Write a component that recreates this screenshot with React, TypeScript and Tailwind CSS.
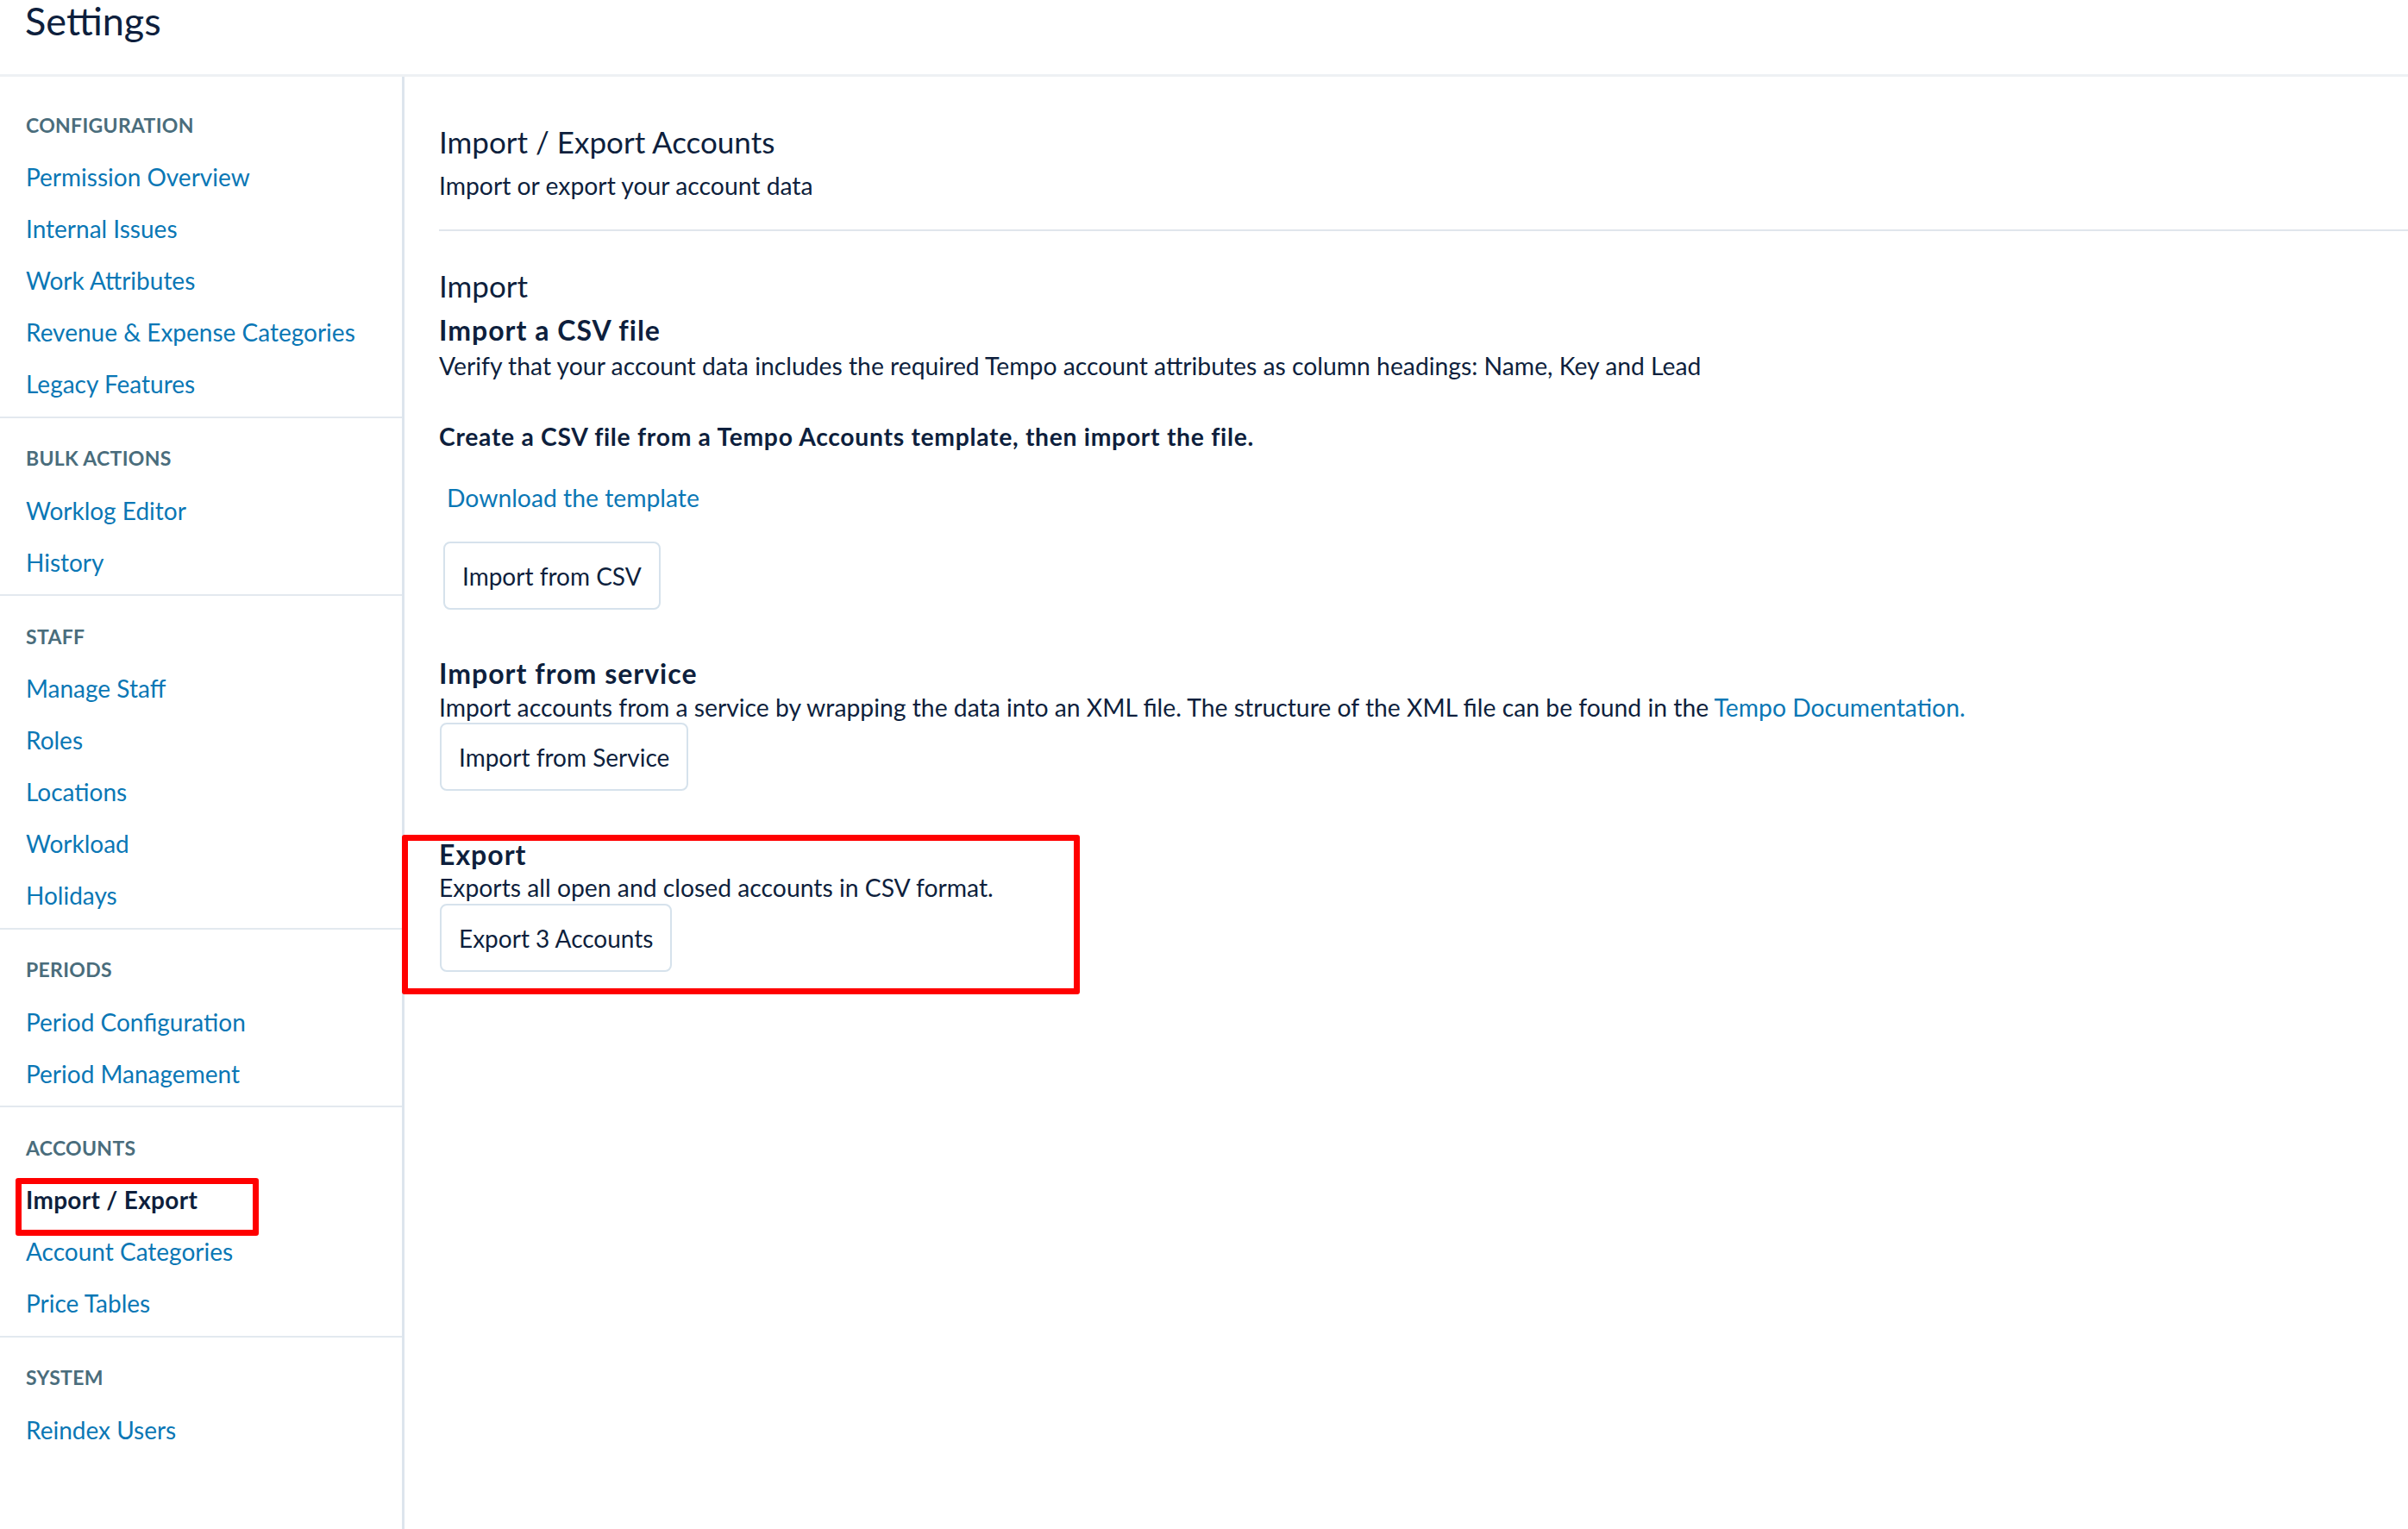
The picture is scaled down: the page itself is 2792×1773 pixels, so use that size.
import React from "react";

type NavGroup = {
    title: string;
    items: string[];
};

const groups: NavGroup[] = [
    { title: "CONFIGURATION", items: ["Permission Overview", "Internal Issues", "Work Attributes", "Revenue & Expense Categories", "Legacy Features"] },
    { title: "BULK ACTIONS", items: ["Worklog Editor", "History"] },
    { title: "STAFF", items: ["Manage Staff", "Roles", "Locations", "Workload", "Holidays"] },
    { title: "PERIODS", items: ["Period Configuration", "Period Management"] },
    { title: "ACCOUNTS", items: ["Import / Export", "Account Categories", "Price Tables"] },
    { title: "SYSTEM", items: ["Reindex Users"] },
];

const ACTIVE = "Import / Export";

function Sidebar() {
    return (
        <aside className="w-[469px] shrink-0 border-r-[3px] border-[#dde5ed] pt-[9px]">
            {groups.map((group, gi) => (
                <div
                    key={group.title}
                    className={`pt-[17px] pb-[7.5px] ${gi < groups.length - 1 ? "border-b-2 border-[#e3e9ef]" : ""}`}
                >
                    <div className="h-[60px] flex items-center px-[30px] text-[23px] font-bold text-[#4a6d7c] tracking-[0.3px]">
                        {group.title}
                    </div>
                    {group.items.map((item) =>
                        item === ACTIVE ? (
                            <div key={item} className="relative h-[60px] flex items-center px-[30px]">
                                <span className="text-[28px] font-bold text-[#0e1f3d] tracking-[0.3px]">{item}</span>
                                {/* highlight box */}
                                <div className="absolute left-[18px] top-[5px] w-[282px] h-[67px] border-[7px] border-[#ff0000] rounded-[3px]" />
                            </div>
                        ) : (
                            <a key={item} href="#" className="h-[60px] flex items-center px-[30px] text-[28px] text-[#0a77b5]">
                                {item}
                            </a>
                        )
                    )}
                </div>
            ))}
        </aside>
    );
}

function OutlineButton({ label }: { label: string }) {
    return (
        <button className="h-[79px] px-[20px] border-2 border-[#d6e2ec] rounded-[8px] bg-white text-[28px] text-[#0e1f3d]">
            {label}
        </button>
    );
}

function App() {
    return (
        <div className="w-[2792px] min-h-[1773px] bg-white text-[#0e1f3d] font-['Lato',sans-serif] flex flex-col">
            {/* header */}
            <header className="h-[89px] shrink-0 border-b-[3px] border-[#eef1f4] px-[29px]">
                <h1 className="text-[45px] leading-none pt-[2px] font-normal">Settings</h1>
            </header>

            <div className="flex flex-1">
                <Sidebar />

                <main className="flex-1 pl-[40px] pt-[53px] text-[28.3px]">
                    <h2 className="text-[35px] leading-[44px]">Import / Export Accounts</h2>
                    <p className="mt-[11px] leading-[36px]">Import or export your account data</p>

                    <div className="mt-[33px] border-t-2 border-[#e0e6ec]" />

                    <h2 className="mt-[41px] text-[35px] leading-[44px]">Import</h2>
                    <h3 className="mt-[10px] text-[32px] leading-[40px] font-bold tracking-[1px]">Import a CSV file</h3>
                    <p className="mt-[3px] leading-[36px]">
                        Verify that your account data includes the required Tempo account attributes as column headings: Name, Key and Lead
                    </p>
                    <p className="mt-[46px] leading-[36px] font-bold tracking-[0.7px]">
                        Create a CSV file from a Tempo Accounts template, then import the file.
                    </p>
                    <a href="#" className="block mt-[35px] ml-[9px] leading-[36px] text-[#0a77b5]">
                        Download the template
                    </a>
                    <div className="mt-[33px] ml-[5px]">
                        <OutlineButton label="Import from CSV" />
                    </div>

                    <h3 className="mt-[54px] text-[32px] leading-[40px] font-bold tracking-[1px]">Import from service</h3>
                    <p className="mt-[1px] leading-[36px]">
                        Import accounts from a service by wrapping the data into an XML file. The structure of the XML file can be found in the{" "}
                        <a href="#" className="text-[#0a77b5]">Tempo Documentation.</a>
                    </p>
                    <div className="ml-[1px]">
                        <OutlineButton label="Import from Service" />
                    </div>

                    {/* export section, highlighted */}
                    <section className="relative mt-[54px]">
                        <div className="absolute -left-[43px] -top-[3px] w-[786px] h-[185px] border-[7px] border-[#ff0000] rounded-[3px] pointer-events-none" />
                        <h3 className="text-[32px] leading-[40px] font-bold tracking-[1px]">Export</h3>
                        <p className="leading-[36px]">Exports all open and closed accounts in CSV format.</p>
                        <div className="ml-[1px] mt-[1px]">
                            <OutlineButton label="Export 3 Accounts" />
                        </div>
                    </section>
                </main>
            </div>
        </div>
    );
}

export default App;
